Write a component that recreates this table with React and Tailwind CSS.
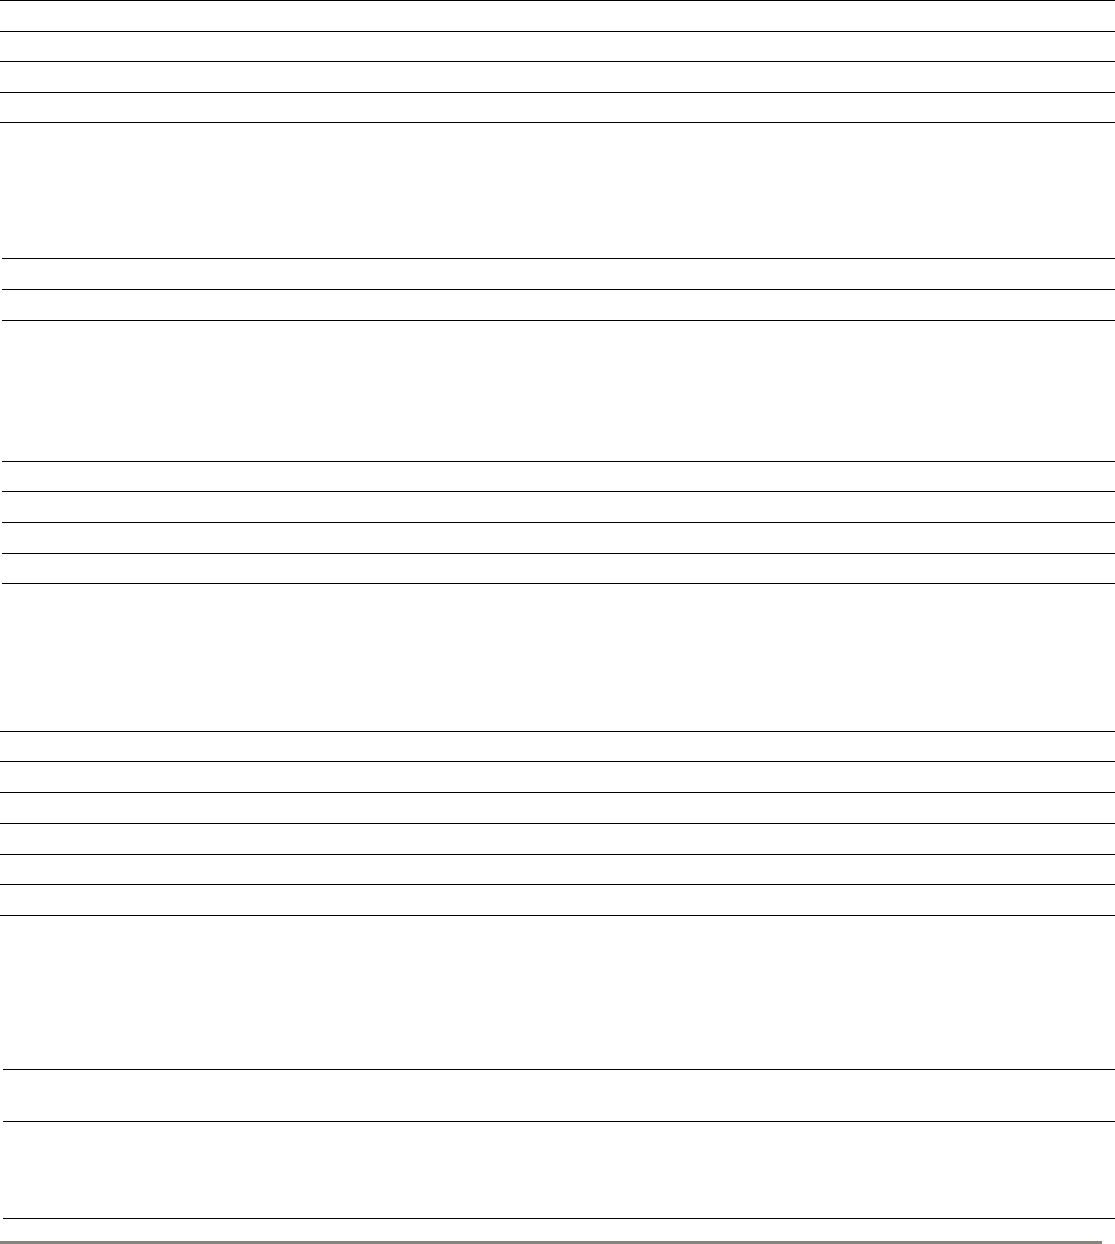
const rows = [
  // [height, left offset class]
  { h: 'h-[31px]', ml: '' },
  { h: 'h-[30px]', ml: '' },
  { h: 'h-[31px]', ml: '' },
  { h: 'h-[30px]', ml: '' },
  { h: 'h-[136px]', ml: '' },
  { h: 'h-[31px]', ml: 'ml-[2px]' },
  { h: 'h-[31px]', ml: 'ml-[2px]' },
  { h: 'h-[141px]', ml: 'ml-[2px]' },
  { h: 'h-[30px]', ml: 'ml-[2px]' },
  { h: 'h-[31px]', ml: 'ml-[2px]' },
  { h: 'h-[31px]', ml: 'ml-[2px]' },
  { h: 'h-[30px]', ml: 'ml-[2px]' },
  { h: 'h-[148px]', ml: 'ml-[2px]' },
  { h: 'h-[30px]', ml: '' },
  { h: 'h-[31px]', ml: '' },
  { h: 'h-[31px]', ml: '' },
  { h: 'h-[31px]', ml: '' },
  { h: 'h-[30px]', ml: '' },
  { h: 'h-[31px]', ml: '' },
  { h: 'h-[154px]', ml: '' },
  { h: 'h-[52px]', ml: 'ml-[3px]' },
  { h: 'h-[97px]', ml: 'ml-[3px]' },
  { h: 'h-[23px]', ml: 'ml-[3px]' },
]

export default function App() {
  return (
    <div className="w-[1115px] h-[1244px] bg-white flex flex-col overflow-hidden" style={{ fontFamily: '"Liberation Sans", sans-serif' }}>
      {rows.map((r, i) => (
        <div key={i} className={`${r.h} ${r.ml} shrink-0 border-t border-black`} />
      ))}
      <div className="h-[3px] w-[1102px] shrink-0 bg-[#85857d]" />
    </div>
  )
}
